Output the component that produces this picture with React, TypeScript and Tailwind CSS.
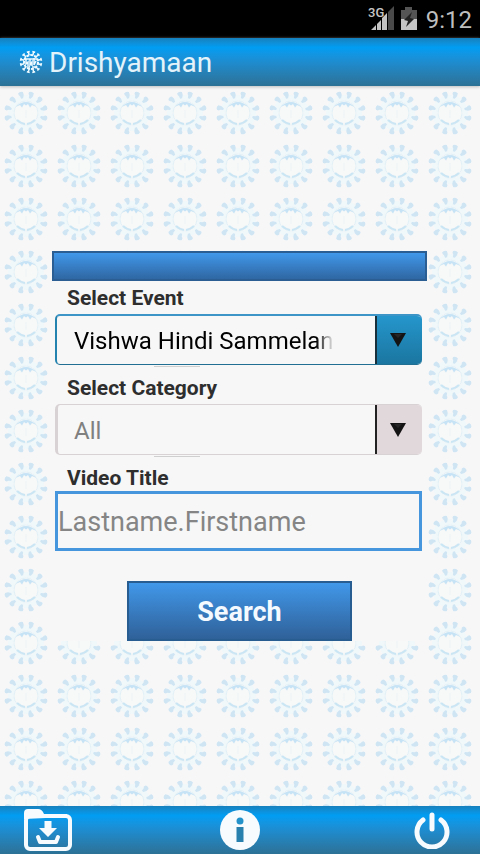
import { useState } from 'react';

const rays = [15, 45, 75, 105, 135, 165, 195, 225, 255, 285, 315, 345];

function SunPattern() {
  return (
    <svg className="absolute inset-0 w-full h-full" aria-hidden="true">
      <defs>
        <pattern id="suns" width="53" height="53" patternUnits="userSpaceOnUse">
          <circle cx="26" cy="27" r="15.500" fill="none" stroke="#f1f8fa" strokeWidth="5" />
          {rays.map((angle) => (
            <g key={angle} transform={`rotate(${angle} 26 27)`}>
              <path d="M23.500 6 q2.500 -2 5 0 v3 l-1.500 3 h-2 l-.5 -3 l-1 -1z" fill="#cfe5f4" />
              <path d="M24 14 l2 1.500 l2 -1.500" fill="none" stroke="#edf7fa" strokeWidth="2" />
            </g>
          ))}
          <circle cx="26" cy="27" r="12" fill="#f7f8f8" stroke="#e3f1f7" strokeWidth="1" />
          <path
            d="M15.500 21 Q26 11 36.500 21 L32 19 L30 21.500 L28 18 L26 19.500 L24 18 L22 21.500 L20 19z"
            fill="#c6e3f6"
          />
          <path d="M17 34 Q20 37 25 38 M35 34 Q32 37 27 38" fill="none" stroke="#cae5f4" strokeWidth="2" />
          <path d="M26 24 v8" stroke="#f0f5f7" strokeWidth="1" />
        </pattern>
      </defs>
      <rect width="100%" height="100%" fill="url(#suns)" />
    </svg>
  );
}

function StatusBar() {
  return (
    <div className="h-[38px] bg-black flex items-center justify-end pr-2 text-[#bebebe]">
      <svg width="28" height="28" viewBox="0 0 28 28" className="mr-1" aria-label="3G signal">
        <path d="M3 25 L8 20 V25z M9 25 V19 L13 15 V25z M14 25 V13 L19 8 V25z" fill="#c4c4c4" />
        <path d="M20 25 V7 L26 1 V25z" fill="#4a4a4a" />
        <path d="M0 0 H15 V10 L12 13 H0z" fill="#000" />
        <text x="0" y="12" fontSize="13" fontWeight="500" fontFamily="Roboto, sans-serif" fill="#c4c4c4">3G</text>
      </svg>
      <svg width="18" height="26" viewBox="0 0 18 26" className="mr-2" aria-label="Battery charging">
        <path d="M5 1 H12 V4 H17 V14 H1 V4 H5z" fill="#555" />
        <path d="M1 13 H17 V24 H1z" fill="#c4c4c4" />
        <path d="M12 6 L4 14 L8 15 L6 21 L14 13 L10 12z" fill="#222" />
      </svg>
      <span className="pt-px text-2xl">9:12</span>
    </div>
  );
}

function SunLogo() {
  return (
    <svg width="24" height="24" viewBox="0 0 24 24" fill="none" stroke="#eefaff" aria-hidden="true">
      {rays.map((angle) => (
        <path key={angle} d="M10.500 1.500 h3 M12 1 v4" strokeWidth="1.500" transform={`rotate(${angle} 12 12)`} />
      ))}
      <circle cx="12" cy="12" r="7" strokeWidth="2" strokeDasharray="3 1" />
      <path
        d="M6 9 h12 M7 9 v5 l2 -2 v4 M11 9 v6 l2 -3 v4 M15 8 v7 l2 -4 M8 17 h3 M13 17 h3"
        strokeWidth="1.500"
      />
    </svg>
  );
}

function Arrow() {
  return (
    <svg width="16" height="14" viewBox="0 0 16 14" aria-hidden="true">
      <path d="M0 0 H16 L8 14z" fill="#141414" />
      <path d="M4 1 H12 L8 5z" fill="#262626" />
    </svg>
  );
}

export default function App() {
  const [event, setEvent] = useState('Vishwa Hindi Sammelan');
  const [title, setTitle] = useState('');

  const handleSearch = (e: React.FormEvent) => {
    e.preventDefault();
  };

  return (
    <div className="min-h-screen flex flex-col bg-[#f7f7f7] font-[Roboto,sans-serif]">
      <StatusBar />

      <header className="relative z-10 h-12 flex items-center pl-[19px] gap-[6px] bg-linear-to-b from-[#1681bd] via-[#009df3] via-20% to-[#2c7196] text-[#e4f3fa] shadow-[0_1px_3px_#bdbdbd]">
        <SunLogo />
        <h1 className="pt-0.5 text-[28px] leading-8">Drishyamaan</h1>
      </header>

      <main className="relative flex-1 flex items-center pl-[52px] pr-[53px]">
        <SunPattern />
        <form onSubmit={handleSearch} className="relative w-full bg-[#f7f7f7] text-[#2e2e2e]">
          <div className="h-[30px] border-2 border-[#2b5f94] bg-linear-to-b from-[#4198ea] to-[#2f67a3]" />

          <div className="pl-[3px] pr-[5px] pt-[5px]">
            <label htmlFor="event" className="block pl-3 mb-1 text-[21px] leading-6 font-bold">
              Select Event
            </label>
            <div className="relative h-[51px] rounded-[5px] border-2 border-r-0 border-b border-t-[#3d94c6] border-l-[#2583b0] border-b-[#216f93] overflow-hidden">
              <select
                id="event"
                value={event}
                onChange={(e) => setEvent(e.target.value)}
                className="appearance-none w-full h-full pt-0.5 pl-[17px] text-2xl text-black outline-none mask-r-from-[calc(100%-106px)] mask-r-to-[calc(100%-88px)]"
              >
                <option>Vishwa Hindi Sammelan</option>
              </select>
              <div className="absolute inset-y-0 right-0 w-[47px] pr-1 flex items-center justify-center border-l-2 border-[#17303c] bg-linear-to-b from-[#2596cc] to-[#1b76a0] pointer-events-none">
                <Arrow />
              </div>
            </div>
            <div className="mt-px ml-[99px] w-[46px] h-px bg-[#cfcfcf]" />

            <label htmlFor="category" className="block pl-3 mt-[9px] mb-1 text-[21px] leading-6 font-bold">
              Select Category
            </label>
            <div className="relative h-[51px] rounded-[5px] border border-l-3 border-r-0 border-[#d9d2d4] overflow-hidden">
              <select
                id="category"
                disabled
                className="appearance-none w-full h-full pt-0.5 pl-4 text-2xl text-[#808080] disabled:opacity-100"
              >
                <option>All</option>
              </select>
              <div className="absolute inset-y-0 right-0 w-[47px] pr-1 flex items-center justify-center border-l-2 border-[#222] bg-[#e1d8db] pointer-events-none">
                <Arrow />
              </div>
            </div>
            <div className="mt-px ml-[99px] w-[46px] h-px bg-[#cfcfcf]" />

            <label htmlFor="title" className="block pl-3 mt-[9px] mb-px text-[21px] leading-6 font-bold">
              Video Title
            </label>
            <input
              id="title"
              type="text"
              placeholder="Lastname.Firstname"
              value={title}
              onChange={(e) => setTitle(e.target.value)}
              className="block w-full h-[60px] pt-0.5 border-3 border-[#4596dc] text-[27px] text-black placeholder:text-[#858585] outline-none"
            />
          </div>

          <button
            type="submit"
            className="block w-[225px] h-[60px] pt-0.5 mx-auto mt-[30px] border-2 border-[#285d91] bg-linear-to-b from-[#4198ea] to-[#2f6199] text-[27px] font-bold text-[#f4faff]"
          >
            Search
          </button>
        </form>
      </main>

      <footer className="h-12 flex items-center justify-between px-6 bg-linear-to-b from-[#1681bd] via-[#009df3] via-20% to-[#2c7196] text-[#f7fbfd]">
        <button type="button" aria-label="Downloads" className="w-12 flex justify-center">
          <svg width="48" height="42" viewBox="0 0 48 42" fill="none" stroke="currentColor">
            <path d="M0 10 V4 Q0 0 4 0 H14 Q18 0 20 5 H43 V8z" fill="currentColor" stroke="none" />
            <rect x="2" y="7" width="44" height="33" rx="4" strokeWidth="4" />
            <path d="M20.500 12 H27.500 V19 H33 L24 28 L15 19 H20.500z" fill="currentColor" stroke="none" />
            <path d="M14 28 L16 33 H32 L34 28" strokeWidth="4" strokeLinecap="round" strokeLinejoin="round" />
          </svg>
        </button>
        <button type="button" aria-label="Information" className="w-12 flex justify-center">
          <svg width="40" height="40" viewBox="0 0 40 40">
            <circle cx="20" cy="20" r="20" fill="currentColor" />
            <circle cx="20" cy="11" r="3.500" fill="#2391ca" />
            <path d="M16.500 17 H23.500 V32 H16.500z" fill="#2880ae" />
          </svg>
        </button>
        <button type="button" aria-label="Exit" className="w-12 flex justify-center">
          <svg width="36" height="38" viewBox="0 0 36 38" fill="none" stroke="currentColor" strokeWidth="5" strokeLinecap="round">
            <path d="M18 4 V18" />
            <path d="M9 9 A15 15 0 1 0 27 9" />
          </svg>
        </button>
      </footer>
    </div>
  );
}
